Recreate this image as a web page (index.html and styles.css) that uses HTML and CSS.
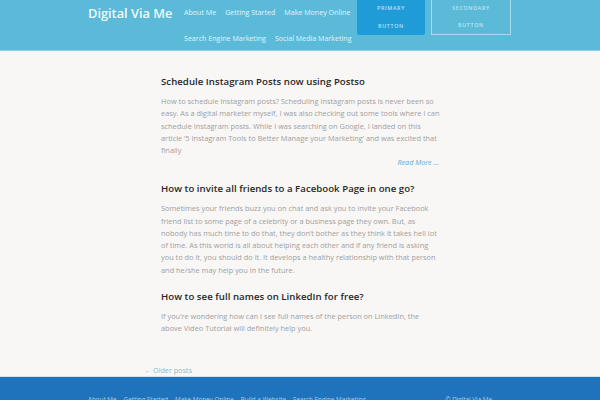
FILE: index.html
```html
<!DOCTYPE html>
<html lang="en">
<head>
<meta charset="utf-8">
<title>Digital Via Me</title>
<link rel="stylesheet" href="styles.css">
</head>
<body>
<header class="site-header">
  <div class="header-inner">
    <div class="logo">Digital Via Me</div>
    <nav class="main-nav">
      <a href="#">About Me</a>
      <a href="#">Getting Started</a>
      <a href="#">Make Money Online</a>
      <a href="#">Search Engine Marketing</a>
      <a href="#">Social Media Marketing</a>
    </nav>
    <a class="btn btn-primary" href="#">Primary<br>Button</a>
    <a class="btn btn-secondary" href="#">Secondary<br>Button</a>
  </div>
</header>
<main class="container">
  <article class="post">
    <h2 class="post-title">Schedule Instagram Posts now using Postso</h2>
    <p class="excerpt">How to schedule Instagram posts? Scheduling Instagram posts is never been so easy. As a digital marketer myself, I was also checking out some tools where I can schedule Instagram posts. While I was searching on Google, I landed on this article ‘5 Instagram Tools to Better Manage your Marketing’ and was excited that finally</p>
    <a class="read-more" href="#">Read More …</a>
  </article>
  <article class="post">
    <h2 class="post-title">How to invite all friends to a Facebook Page in one go?</h2>
    <p class="excerpt">Sometimes your friends buzz you on chat and ask you to invite your Facebook friend list to some page of a celebrity or a business page they own. But, as nobody has much time to do that, they don’t bother as they think it takes hell lot of time. As this world is all about helping each other and if any friend is asking you to do it, you should do it. It develops a healthy relationship with that person and he/she may help you in the future.</p>
  </article>
  <article class="post">
    <h2 class="post-title">How to see full names on LinkedIn for free?</h2>
    <p class="excerpt">If you’re wondering how can I see full names of the person on LinkedIn, the above Video Tutorial will definitely help you.</p>
  </article>
  <div class="nav-links"><a href="#">← Older posts</a></div>
</main>
<footer class="site-footer">
  <div class="footer-inner">
    <nav class="footer-nav">
      <a href="#">About Me</a>
      <a href="#">Getting Started</a>
      <a href="#">Make Money Online</a>
      <a href="#">Build a Website</a>
      <a href="#">Search Engine Marketing</a>
    </nav>
    <div class="copy">© Digital Via Me</div>
  </div>
</footer>
</body>
</html>
```

FILE: styles.css
```css
* { box-sizing: border-box; }
html, body { margin: 0; padding: 0; }
body {
  background: #f8f7f6;
  font-family: "Open Sans", "Liberation Sans", sans-serif;
  color: #9b9b9b;
}
a { text-decoration: none; }

.site-header {
  background: #5abad8;
  height: 51px;
  border-bottom: 1px solid #8fd0e4;
}
.header-inner {
  width: 424px;
  margin: 0 auto;
  display: flex;
  align-items: flex-start;
}
.logo {
  font-family: "Open Sans", sans-serif;
  font-weight: 600;
  font-size: 12.8px;
  line-height: 26px;
  color: #f2fafd;
  white-space: nowrap;
  width: 96px;
  flex: none;
}
.main-nav {
  width: 173px;
  flex: none;
  display: flex;
  flex-wrap: wrap;
  column-gap: 9px;
}
.main-nav a {
  font-size: 7.1px;
  line-height: 25.5px;
  color: #e2f4fa;
  white-space: nowrap;
}
.btn {
  flex: none;
  height: 35px;
  text-align: center;
  text-transform: uppercase;
  font-size: 5.3px;
  letter-spacing: 0.7px;
  line-height: 17.5px;
  font-weight: 600;
  white-space: nowrap;
}
.btn-primary {
  width: 68px;
  background: #1f9bd8;
  color: #b9e2f4;
  border-radius: 0 0 2px 2px;
}
.btn-secondary {
  width: 80px;
  margin-left: 6px;
  border: 1px solid #a6dbec;
  border-top: none;
  color: #bfe6f3;
  line-height: 17px;
}

.container {
  width: 312px;
  margin: 0 auto;
  padding-top: 24px;
}
.post {
  padding: 0 15px 0 17px;
  margin-bottom: 14px;
}
.post-title {
  margin: 0 0 6px;
  font-size: 9.6px;
  line-height: 14px;
  font-weight: 600;
  color: #262626;
  letter-spacing: 0.05px;
}
.excerpt {
  margin: 0;
  font-size: 7.4px;
  line-height: 12.25px;
  color: #a0a0a0;
}
.read-more {
  display: block;
  text-align: right;
  font-style: italic;
  font-size: 7.2px;
  line-height: 12px;
  color: #59acd0;
  padding-right: 2px;
}
.nav-links {
  padding: 16px 0 0;
  font-size: 7.2px;
  line-height: 12px;
}
.nav-links a { color: #8ab9cf; }

.site-footer {
  background: #1f73bd;
  border-top: 1px solid #cde4f2;
  height: 60px;
}
.footer-inner {
  width: 424px;
  margin: 0 auto;
  padding-top: 17px;
  display: flex;
  justify-content: space-between;
}
.footer-nav {
  display: flex;
  column-gap: 7px;
}
.footer-nav a, .copy {
  font-size: 6.3px;
  line-height: 12px;
  color: #a7cbe9;
  white-space: nowrap;
}
.copy { margin-right: 20px; }
```
